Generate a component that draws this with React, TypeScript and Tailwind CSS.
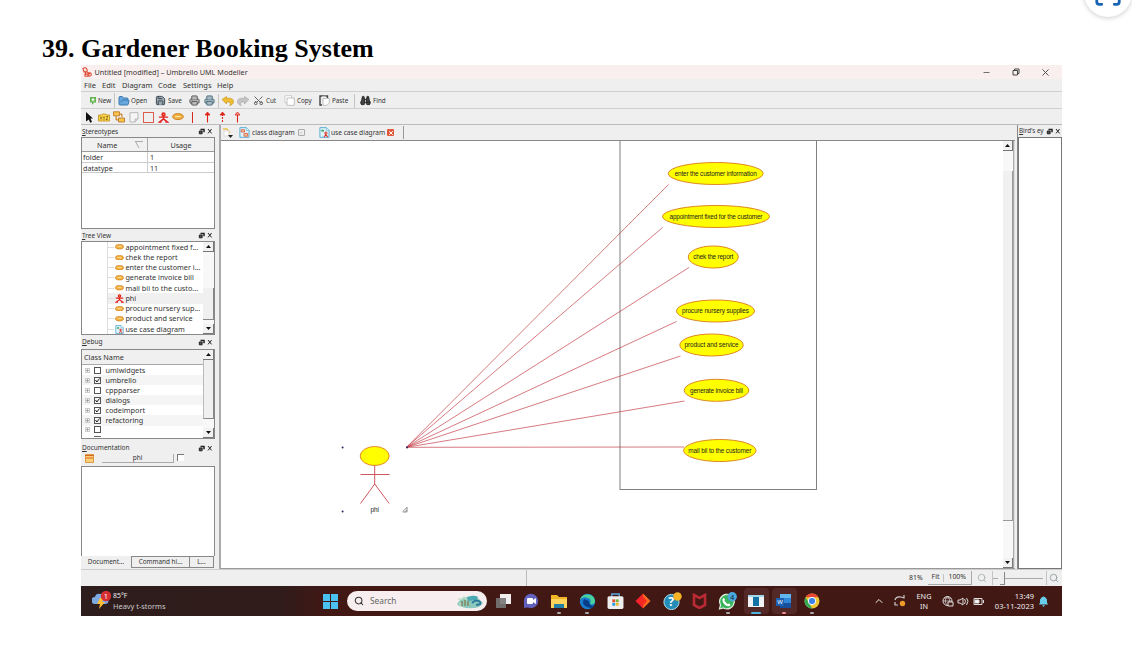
import React from 'react';
import { Scan, Search, Scissors, Printer, Save, FolderOpen, Minus, X, Binoculars, ChevronUp } from 'lucide-react';

const Actor = ({ s = 10, c = '#e32222' }: { s?: number; c?: string }) => (
  <svg width={s} height={s} viewBox="0 0 12 12" fill="none" stroke={c} strokeWidth="1.6">
    <circle cx="6" cy="2.6" r="1.6" fill="#f8a13a" />
    <path d="M1 5.6h10M6 4v4M6 7.5L1.5 11H4M6 7.5L10.5 11H8" />
  </svg>
);
const Oval = ({ w = 9 }: { w?: number }) => (
  <svg width={w} height={w * 0.6} viewBox="0 0 15 9"><ellipse cx="7.5" cy="4.5" rx="6.8" ry="3.8" fill="#f0ad3c" stroke="#c9781c" /><path d="M4 4.5h7" stroke="#fff0b0" strokeWidth="1.3" /></svg>
);
const DiagramIcon = ({ s = 11, actor = false }: { s?: number; actor?: boolean }) => (
  <svg width={s} height={s} viewBox="0 0 12 12">
    <path d="M1 .7h7l3 3v7.6H1z" fill="#dff3fb" stroke="#4ea7cf" />
    <path d="M8 .7v3h3" fill="#fff" stroke="#4ea7cf" strokeWidth=".7" />
    {actor
      ? <><path d="M2.5 3h3v2h-3z" fill="#49a665" /><path d="M7.5 5v3M5.5 6.5h4M7.5 8l-2 3M7.5 8l2 3" stroke="#dc3b2f" strokeWidth="1.2" /></>
      : <><path d="M2.5 3h3.5v2.5H2.5zM5.5 7h4v3h-4z" fill="#f7c29f" stroke="#dc5b3b" strokeWidth=".9" /></>}
  </svg>
);
const DockButtons = () => (
  <svg className="shrink-0" width="15" height="7" viewBox="0 0 15 7" fill="none" stroke="#222">
    <path d="M2.5 1.5h3.5v2.7" strokeWidth="1.5" /><path d="M1.3 3h2.8v2.8H1.3z" fill="#555" strokeWidth="1" />
    <path d="M10 1l3.6 4.4M13.6 1L10 5.4" strokeWidth="1" />
  </svg>
);
const DockHeader = ({ k, rest, className }: { k: string; rest: string; className: string }) => (
  <div className={`flex shrink-0 items-center justify-between pl-px pr-[2px] text-[6.5px] ${className}`}>
    <span className="whitespace-nowrap text-[#333]"><u>{k}</u>{rest}</span><DockButtons />
  </div>
);
const Arrow = ({ up = false }: { up?: boolean }) => (
  <div className="flex h-[10px] shrink-0 items-center justify-center border-r border-b border-[#777] bg-[#f2f2f2]">
    <svg width="5" height="3" viewBox="0 0 5 3"><path d={up ? 'M0 3L2.5 0L5 3z' : 'M0 0L2.5 3L5 0z'} fill="#111" /></svg>
  </div>
);
const Line = ({ className = '' }: { className?: string }) => <div className={`w-px shrink-0 bg-[#c4c4c4] ${className}`} />;
const Tool = ({ w, icon, label, className = '' }: { w: string; icon: React.ReactNode; label?: string; className?: string }) => (
  <div className={`flex h-full shrink-0 items-center gap-[2px] whitespace-nowrap ${w} ${className}`}>{icon}{label && <span>{label}</span>}</div>
);
const RedArrow = ({ dashed = false, open = false }: { dashed?: boolean; open?: boolean }) => (
  <svg width="7" height="12" viewBox="0 0 7 12" fill="none" stroke="#dc2418" strokeWidth="1.1">
    <path d="M3.5 3v8.5" strokeDasharray={dashed ? '2 1' : undefined} /><path d="M1 4L3.5 1L6 4z" fill={open ? '#f5a090' : '#dc2418'} strokeWidth=".8" />
  </svg>
);
const Sheet = () => (
  <svg width="11" height="11" viewBox="0 0 11 11"><path d="M1 .7h6.5v7H1z" fill="#fff" stroke="#bbb" strokeWidth=".7" /><path d="M3 3h7.3v7.3H3z" fill="#fff" stroke="#aaa" strokeWidth=".7" /></svg>
);
const Clipboard = () => (
  <svg width="11" height="11" viewBox="0 0 11 11" fill="none"><path d="M3 1H1v9h2M6.5 1h2v2" stroke="#444" strokeWidth="1.4" /><path d="M3 .7h3.5" stroke="#777" strokeWidth="1.4" /><path d="M4 3.5h6.3V8L8 10.3H4z" fill="#fff" stroke="#aaa" strokeWidth=".7" /></svg>
);
const Undo = ({ c, shade, flip = false }: { c: string; shade: string; flip?: boolean }) => (
  <svg className={flip ? '-scale-x-100' : ''} width="12" height="10" viewBox="0 0 12 10"><path d="M0 3.5L4.5.5v2C9 1.5 11.5 3 11.5 5.5c0 2-1.5 3.6-4 4 1.5-1.3 1.7-3.7-3-3.5v2z" fill={c} stroke={shade} strokeWidth=".6" /></svg>
);

const tree = [
  ['appointment fixed f...', 'o'], ['chek the report', 'o'], ['enter the customer i...', 'o'], ['generate invoice bill', 'o'],
  ['mail bil to the custo...', 'o'], ['phi', 'a'], ['procure nursery sup...', 'o'], ['product and service', 'o'], ['use case diagram', 'd'],
];
const classes: [string, boolean][] = [['umlwidgets', false], ['umbrello', true], ['cppparser', false], ['dialogs', true], ['codeimport', true], ['refactoring', true], ['', false]];

const cases: [number, number, number, number, string, number][] = [
  [715.7, 173.5, 47.5, 11, 'enter the customer information', 82],
  [716, 216.5, 53.5, 11, 'appointment fixed for the customer', 93],
  [713.3, 257, 25, 11, 'chek the report', 40],
  [715.5, 311, 39, 11, 'procure nursery supplies', 67],
  [711.5, 345, 31.7, 11, 'product and service', 54],
  [716.5, 390.3, 32.3, 11, 'generate invoice bill', 53],
  [719.8, 450.5, 36.2, 11, 'mail bil to the customer', 63],
];
const ends = [[668.5, 184.5], [662.5, 227.5], [689, 267.5], [676.5, 321.5], [680.5, 356], [684.5, 401], [684, 447]];

const Diagram = () => (
  <svg width="782" height="427" viewBox="221 141 782 427" className="block shrink-0">
    <rect x="620" y="130" width="196.5" height="359.5" fill="none" stroke="#808080" />
    {ends.map(([x, y]) => <line key={y} x1="406.5" y1="447.3" x2={x} y2={y + 0.01} stroke="#c43c48" strokeWidth=".8" opacity=".85" />)}
    {cases.map(([x, y, rx, ry, t, w]) => (
      <g key={t}>
        <ellipse cx={x} cy={y} rx={rx} ry={ry} fill="#ff0" stroke="#d8791c" strokeWidth=".9" />
        <text x={x} y={y + 2.4} textAnchor="middle" textLength={w} fontSize="6.4" fontFamily="Liberation Sans, sans-serif" fill="#222">{t}</text>
      </g>
    ))}
    <ellipse cx="374.7" cy="456" rx="14.5" ry="9.5" fill="#ff0" stroke="#dd7a20" strokeWidth=".9" />
    <path d="M374.7 465.5v19M360.5 474.5h29M374.7 484l-14.2 19.5M374.7 484l14.5 19.5" stroke="#c9444c" strokeWidth=".9" fill="none" />
    <text x="374.7" y="511.5" textAnchor="middle" textLength="8.5" fontSize="6.4" fontFamily="Liberation Sans, sans-serif" fill="#222">phi</text>
    <g fill="#252560"><circle cx="342.6" cy="447.6" r="1" /><circle cx="407" cy="447.6" r="1" /><circle cx="342.6" cy="511.5" r="1" /></g>
    <path d="M402.5 511.8l4.5-4.5M405 511.8l2-2M407 507v5h-4" stroke="#777" strokeWidth=".8" fill="none" />
  </svg>
);

const Task = ({ children, w = 'w-[28px]', mark = '', box = false }: { children: React.ReactNode; w?: string; mark?: string; box?: boolean }) => (
  <div className={`relative flex h-full shrink-0 items-center justify-center ${w}`}>
    <div className={`flex h-[26px] w-[25px] shrink-0 items-center justify-center rounded-sm ${box ? 'bg-[#522927]' : ''}`}>{children}</div>
    {mark && <i className={`absolute bottom-[2px] h-[2px] rounded ${mark}`} />}
  </div>
);

export default function App() {
  return (
    <div className="relative h-[654px] w-[1132px] overflow-hidden bg-white pl-[81px] font-['Noto_Sans','Open_Sans',sans-serif] text-[#333]">
      <h1 className="-ml-[39px] flex h-[65px] items-end pb-[1px] font-['Liberation_Serif',serif] text-[26px] leading-[30px] font-bold whitespace-nowrap text-black">39. Gardener Booking System</h1>
      <div className="absolute -top-[31px] left-[1084px] flex size-12 items-center justify-center rounded-full bg-white shadow-[0_1px_5px_rgba(0,0,0,0.2)]"><Scan size={30} color="#1764b5" strokeWidth={2.2} /></div>
      <div className="flex h-[551px] w-[981px] flex-col bg-[#efefef]">
        <div className="flex h-[14px] shrink-0 items-center bg-[#faefef]">
          <svg className="ml-[1px] mr-[2.5px]" width="10" height="10" viewBox="0 0 10 10" fill="none" stroke="#dc4932" strokeWidth="1.1"><path d="M1 1.5q3-2 4 1T2 5zM3 4l1 4M5 5l3 2" /><circle cx="7.7" cy="7.5" r="1.6" /><path d="M3 7h3v2.3H3z" /></svg>
          <span className="whitespace-nowrap text-[7.25px]">Untitled [modified] – Umbrello UML Modeller</span>
          <div className="ml-auto flex items-center pr-[11px] text-[#444]"><Minus size={9} strokeWidth={2} /><svg className="ml-[21px]" width="8" height="8" viewBox="0 0 8 8" fill="none" stroke="currentColor"><path d="M1 2.5h4.5V7H1zM2.5 2.5V1H7v4.5H5.5" /></svg><X className="ml-[20px]" size={11} strokeWidth={2} /></div>
        </div>
        <div className="flex h-[13px] shrink-0 items-center border-b border-[#cfcfcf] pt-px pl-[3px] text-[7.5px]">
          {[['File', 'w-[18px]'], ['Edit', 'w-[20px]'], ['Diagram', 'w-[36px]'], ['Code', 'w-[25px]'], ['Settings', 'w-[34px]'], ['Help', 'w-[20px]']].map(([t, w]) => <span key={t} className={w}>{t}</span>)}
        </div>
        <div className="flex h-[17px] shrink-0 items-center border-b border-[#cfcfcf] pt-px pl-[3px] text-[6.3px]">
          <Tool w="w-[31px]" className="gap-0! border-r border-[#c4c4c4] pl-[5px]" icon={<svg className="mr-px" width="8" height="10" viewBox="0 0 8 10"><path d="M1 1h6v5.5H5L3 9V6.5H1z" fill="#63b552" /><path d="M4 2v3.5M2.4 3.8h3.2" stroke="#fff" strokeWidth="1" /></svg>} label="New" />
          <Tool w="w-[40px]" className="pl-[3px] gap-[1px]!" icon={<FolderOpen size={12} fill="#67a8df" color="#3c78ad" />} label="Open" />
          <Tool w="w-[34px]" icon={<Save size={11} fill="#9ba8b0" color="#35424b" />} label="Save" />
          <Tool w="w-[15px]" icon={<Printer size={11} color="#555" fill="#bbb" />} />
          <Tool w="w-[14px]" icon={<Printer size={11} color="#47697b" fill="#a8bac3" />} />
          <Line className="h-[14px]" />
          <Tool w="w-[18px]" className="pl-[3px]" icon={<Undo c="#f0bd30" shade="#c08a15" />} />
          <Tool w="w-[16px]" icon={<Undo c="#c4c4c4" shade="#a5a5a5" flip />} />
          <Tool w="w-[31px]" icon={<Scissors className="-rotate-90" size={11} color="#555" />} label="Cut" />
          <Tool w="w-[35px]" icon={<Sheet />} label="Copy" />
          <Tool w="w-[35px]" icon={<Clipboard />} label="Paste" />
          <Line className="h-[14px]" />
          <Tool w="w-[35px]" className="pl-[5px]" icon={<Binoculars size={11} fill="#444" color="#222" />} label="Find" />
        </div>
        <div className="flex h-[16px] shrink-0 items-center border-b border-[#bbb] pt-px pl-[4px]">
          <Tool w="w-[13px]" icon={<svg width="9" height="11" viewBox="0 0 9 11"><path d="M1 0l7 6.5H5.5L7 10l-1.8.8L3.8 7.6 1 9.6z" fill="#111" /></svg>} />
          <Tool w="w-[15px]" icon={<svg width="12" height="9" viewBox="0 0 12 9"><path d="M.5 2h3l1-1h3l1 1h3v6H.5z" fill="#ffd64a" stroke="#bb8b18" strokeWidth=".8" /><path d="M2 3.5l2 3M4 3.5l-2 3M5 3.5l1 1.5L7 3.5M6 5v2M8 3.5h2l-2 3h2" stroke="#684c08" strokeWidth=".6" fill="none" /></svg>} />
          <Tool w="w-[16px]" icon={<svg width="12" height="12" viewBox="0 0 12 12" fill="#f7c74a" stroke="#b76b23" strokeWidth=".8"><path d="M.5.8h6v4h-6zM5.5 7h6v4h-6zM3 5v4h2M7 3h2v3" /></svg>} />
          <Tool w="w-[14px]" icon={<svg width="10" height="11" viewBox="0 0 10 11"><path d="M1 .7h8v6L6 10H1zM6 10V7h3" fill="#f5f5f5" stroke="#aaa" strokeWidth=".8" /></svg>} />
          <Tool w="w-[15px]" icon={<span className="size-[11px] border border-[#dd5c50]" />} />
          <Tool w="w-[14px]" icon={<Actor s={11} />} />
          <Tool w="w-[20px]" icon={<Oval w={12} />} />
          <Tool w="w-[12px]" icon={<i className="h-[11px] w-px bg-[#d42a20]" />} />
          <Tool w="w-[15px]" icon={<RedArrow />} /><Tool w="w-[15px]" icon={<RedArrow dashed />} /><Tool w="w-[15px]" icon={<RedArrow open />} />
        </div>
        <div className="flex h-[444px] shrink-0">
          <div className="flex w-[134px] shrink-0 flex-col">
            <DockHeader k="S" rest="tereotypes" className="h-[12px] pt-px" />
            <div className="h-[92px] border border-[#888] bg-white text-[7.2px]">
              <div className="flex h-[14px] border-b border-[#999] bg-[#f1f1f1]"><div className="relative flex w-[66px] items-center border-r border-[#aaa] pt-px pl-[15px]">Name<svg className="absolute right-[4px]" width="8" height="8" viewBox="0 0 8 8"><path d="M0 .5h8M.5.5L4 7" stroke="#aaa" fill="none" /></svg></div><div className="flex flex-1 items-center justify-center pt-px">Usage</div></div>
              {[['folder', '1'], ['datatype', '11']].map(([a, b]) => <div key={a} className="flex h-[10.5px] border-b border-[#ccc] leading-[10px]"><span className="w-[66px] border-r border-[#ccc] pl-[1px]">{a}</span><span className="pl-[2px]">{b}</span></div>)}
            </div>
            <DockHeader k="T" rest="ree View" className="h-[12px] pt-px" />
            <div className="flex h-[94px] border border-[#888] bg-white">
              <div className="flex-1 overflow-hidden text-[7.25px]">
                {tree.map(([t, type]) => <div key={t} className={`ml-[25px] flex h-[10.25px] items-center border-l border-[#ddd] whitespace-nowrap ${t === 'phi' ? 'bg-[#f0f0f0]' : ''}`}><i className="h-px w-[6px] bg-[#ddd]" /><span className="mr-[1.4px] flex w-[10px] shrink-0 justify-center">{type === 'o' ? <Oval /> : type === 'a' ? <Actor s={9} /> : <DiagramIcon s={9} actor />}</span>{t}</div>)}
              </div>
              <div className="flex w-[11px] flex-col bg-[#f8f8f8]"><Arrow up /><div className="mt-[36px] mb-[4px] flex-1 border-r border-b border-[#888] bg-[#f0f0f0]" /><Arrow /></div>
            </div>
            <DockHeader k="D" rest="ebug" className="h-[14px]" />
            <div className="flex h-[90px] border border-[#888] bg-white text-[7.25px]">
              <div className="flex-1 overflow-hidden">
                <div className="flex h-[15px] items-center border-b border-[#aaa] bg-[#f0f0f0] pl-[2px]">Class Name</div>
                {classes.map(([t, on], i) => <div key={i} className={`flex items-center ${i === 6 ? 'h-[9.5px] pb-px' : 'h-[10.1px]'} ${i % 2 ? 'bg-[#f5f5f5]' : ''}`}><span className="mx-[3px] flex size-[5px] items-center justify-center border border-[#ccc]"><svg width="5" height="5" viewBox="0 0 5 5"><path d="M0 2.5h5M2.5 0v5" stroke="#666" strokeWidth=".8" /></svg></span><span className="mr-[4.5px] ml-[1px] flex size-[7px] items-center justify-center border border-[#555]">{on && <svg width="5" height="5" viewBox="0 0 5 5"><path d="M.5 2l1.4 2L4.5.5" fill="none" stroke="#222" /></svg>}</span>{t}</div>)}
                <i className="mt-px ml-[12px] block h-px w-[7px] bg-[#666]" />
              </div>
              <div className="flex w-[11px] flex-col bg-[#f8f8f8]"><Arrow up /><div className="mb-[9px] flex-1 border-x border-b border-[#888] border-l-[#bbb] bg-[#f0f0f0]" /><Arrow /></div>
            </div>
            <DockHeader k="D" rest="ocumentation" className="mt-[3px] h-[12px]" />
            <div className="flex h-[12px] items-start text-[6.5px]"><svg className="ml-[4px]" width="9" height="9" viewBox="0 0 9 9"><path d="M.5.5h8v8h-8z" fill="#ffd07a" stroke="#de9a43" /><path d="M0 1.5h9M1 4h7" stroke="#d46a24" /></svg><span className="ml-[8px] flex h-[9px] w-[72px] items-center justify-center border-r border-b border-[#aaa]">phi</span><span className="ml-[3px] size-[7px] border-t border-l border-[#777] bg-white" /></div>
            <div className="h-[90px] border border-[#888] border-b-0 bg-white" />
            <div className="flex h-[12px] text-[6.4px]"><span className="flex w-[50px] items-center justify-center">Document...</span><span className="flex w-[59px] items-center justify-center border border-[#888]">Command hi...</span><span className="flex w-[24px] items-center justify-center border border-l-0 border-[#888]">L...</span></div>
          </div>
          <div className="ml-[4px] flex w-[796px] flex-col border-l-2 border-[#aaa]">
            <div className="flex h-[16px] shrink-0 items-center border-b border-[#888] text-[6.6px]">
              <svg className="ml-[1px]" width="11" height="10" viewBox="0 0 11 10"><path d="M1 1h4l3 4" fill="none" stroke="#efc04b" strokeWidth="1.3" /><path d="M2 3h5v5H2z" fill="#fff" stroke="#ddd" /><path d="M6 7h5L8.5 10z" fill="#222" /></svg>
              <div className="ml-[6px] flex w-[80px] items-center gap-[2px] whitespace-nowrap"><DiagramIcon />class diagram<span className="ml-[1px] flex size-[7px] items-center justify-center rounded-[1px] border border-[#aaa]"><X size={4} color="#aaa" /></span></div>
              <div className="flex h-[13px] w-[85px] items-center gap-[1px] border-r border-[#999] whitespace-nowrap"><DiagramIcon actor />use case diagram<span className="ml-[1px] flex size-[7px] items-center justify-center rounded-[1px] bg-[#df5a3c]"><X size={6} color="#fff" strokeWidth={4} /></span></div>
            </div>
            <div className="flex flex-1 overflow-hidden border-b border-[#999] bg-white"><Diagram /><div className="flex w-[10px] flex-col bg-[#f8f8f8]"><Arrow up /><div className="mt-[20px] mb-[37px] flex-1 border-r border-b border-[#999] bg-[#f0f0f0]" /><Arrow /></div><div className="flex-1 border-l border-[#aaa] bg-[#ddd]" /></div>
          </div>
          <div className="ml-[2px] flex flex-1 flex-col border-l border-[#888]"><div className="flex h-[12px] shrink-0 items-center justify-between pl-[1px] pr-px text-[6.3px]"><span className="whitespace-nowrap"><u>B</u>ird's ey</span><DockButtons /></div><div className="flex-1 border border-[#777] bg-white" /></div>
        </div>
        <div className="flex h-[17px] shrink-0 items-center border-t border-[#ccc] text-[6.9px]">
          <i className="h-full w-[446px] border-r border-[#bbb]" /><span className="ml-[382px]">81%</span><span className="ml-[5px] flex h-[14px] w-[44px] items-center border-r border-b border-[#aaa] pl-[4px]">Fit<Line className="mx-[4px] h-[8px]" />100%</span><Search className="ml-[5px]" size={10} color="#a5aeb2" /><Line className="ml-[5px] h-[14px]" /><i className="h-px w-[5px] bg-[#aaa]" /><i className="ml-[2px] h-[13px] w-[5px] border-r border-b border-[#888]" /><i className="h-px w-[38px] bg-[#aaa]" /><Line className="ml-[3px] h-[14px]" /><Search className="ml-[2px]" size={10} color="#8e999e" />
        </div>
        <div className="flex h-[30px] shrink-0 items-center bg-[linear-gradient(90deg,#2d1d1c_0,#301c1b_200px,#421814_250px,#421814_100%)] text-[7px] text-[#eee]">
          <svg className="ml-[11px]" width="20" height="22" viewBox="0 0 20 22"><path d="M3 14a3.5 3.5 0 010-7q1-4 5-3 4-1 5 3a3.5 3.5 0 010 7z" fill="#7caae0" /><path d="M8 8h4l-2 4h3l-6 7 1-5H5z" fill="#ffbd38" /><circle cx="14" cy="6" r="5.2" fill="#d62f32" /><text x="14" y="8.8" fontSize="7.5" fill="#fff" textAnchor="middle">1</text></svg>
          <div className="w-[211px] pb-px pl-[1px] text-[7.4px] leading-[10px]"><span className="text-[6.9px]">85°F</span><br /><span className="text-[#ccc]">Heavy t-storms</span></div>
          <svg width="15" height="15" viewBox="0 0 15 15" fill="#49c2f2"><path d="M0 0h7v7H0zM8 0h7v7H8zM0 8h7v7H0zM8 8h7v7H8z" /></svg>
          <div className="ml-[9px] flex h-[20px] w-[140px] items-center rounded-full bg-[#f7efef] pl-[7px] text-[8.3px] text-[#666]"><Search size={10} color="#333" strokeWidth={2.5} /><span className="ml-[6px]">Search</span><svg className="ml-auto mr-[3px]" width="28" height="15" viewBox="0 0 28 15"><path d="M1 10q3-5 7-6 8-4 13-1l6 6-4 4q-10 3-20-1z" fill="#8cc9bd" /><path d="M11 4q6-4 11-1l-2 3-8 1z" fill="#4ba8b5" /><path d="M2 5h4l2-2 3 3M3 9l3 3" fill="none" stroke="#c2dfc5" strokeWidth="1.5" /><path d="M6 7v5M9 6v6M12 7v5" stroke="#837e50" strokeWidth="1.3" /><path d="M16 9q5-5 9 0M20 11l5-1" fill="none" stroke="#2d799b" strokeWidth="1.8" /></svg></div>
          <Task w="w-[32px]"><svg width="17" height="15" viewBox="0 0 17 15"><path d="M5 0h11v10H5z" fill="#f0eeee" /><path d="M1 4h10v10H1z" fill="#777" opacity=".9" /></svg></Task>
          <Task w="w-[23px]"><svg width="16" height="16" viewBox="0 0 16 16"><circle cx="8" cy="8" r="7.2" fill="#6261bd" /><path d="M1 15V8l6 6z" fill="#6261bd" /><rect x="4" y="5" width="6" height="6" rx="1" fill="#fff" /><path d="M10 7l3-2v6l-3-2z" fill="#fff" /></svg></Task>
          <Task w="w-[34px]" mark="w-[4px] bg-[#aaa]"><svg width="17" height="15" viewBox="0 0 17 15"><path d="M0 1h6l2 2h8v11H0z" fill="#f3b527" /><path d="M0 5h16v9H0z" fill="#ffd45c" /><path d="M3 10h10v4H3z" fill="#247fa7" /></svg></Task>
          <Task w="w-[22px]" mark="w-[4px] bg-[#aaa]"><svg width="17" height="17" viewBox="0 0 17 17"><circle cx="8.5" cy="8.5" r="7.7" fill="#187dce" /><path d="M1 7C2 0 15-1 16 8q0 4-5 3 2-5-2-6Q3 3 1 7z" fill="#4bd29a" /><path d="M5 6q-4 7 7 9 2 0 3-2-5 0-5-5z" fill="#083e89" /></svg></Task>
          <Task w="w-[34px]"><svg width="17" height="17" viewBox="0 0 15 16"><path d="M4 5V1h7v4" fill="none" stroke="#5ba8df" strokeWidth="1.3" /><rect x="0" y="3" width="15" height="12" rx="1.5" fill="#eee" /><path d="M4.5 6h2.7v2.7H4.5z" fill="#e44d2c" /><path d="M7.8 6h2.7v2.7H7.8z" fill="#7bb342" /><path d="M4.5 9.3h2.7V12H4.5z" fill="#249be4" /><path d="M7.8 9.3h2.7V12H7.8z" fill="#efb52e" /></svg></Task>
          <Task w="w-[22px]"><svg width="16" height="16" viewBox="0 0 16 16"><path d="M8 .5L.5 8 8 15.5z" fill="#f5222d" /><path d="M8 .5L15.5 8 8 15.5z" fill="#ff6a20" /><path d="M8 3.5L4 8l4 4.5L12 8z" fill="#f52a20" /></svg></Task>
          <Task w="w-[36px]"><svg width="19" height="18" viewBox="0 0 19 18"><circle cx="8.5" cy="10" r="7.6" fill="#218db8" stroke="#b0dbe6" /><text x="8" y="14" fontSize="12" fontWeight="bold" fill="#fff" textAnchor="middle">?</text><circle cx="14.5" cy="4.5" r="4.2" fill="#f5b326" /></svg></Task>
          <Task w="w-[19px]"><svg width="15" height="16" viewBox="0 0 15 16"><path d="M2 2l5.5 3L13 2v10l-5.5 3L2 12z" fill="none" stroke="#b92a34" strokeWidth="2.6" /></svg></Task>
          <Task w="w-[37px]" mark="w-[4px] bg-[#aaa]"><svg width="19" height="18" viewBox="0 0 19 18"><path d="M1.5 17l1-4a7.3 7.3 0 113 3z" fill="#3ab55d" stroke="#e2f2e4" strokeWidth="1.2" /><path d="M5 6l2 1-.5 2 3 3 2-.5 1 2c-3 3-10-3-7.5-7.5" fill="#fff" /><circle cx="14.2" cy="4.8" r="4.7" fill="#4ba8df" /><text x="14.2" y="7.5" textAnchor="middle" fontSize="7" fill="#123">4</text></svg></Task>
          <Task w="w-[20px]" box mark="w-[10px] bg-[#4bb4dd]"><svg width="16" height="13" viewBox="0 0 16 13"><path d="M0 0h16v12H0z" fill="#f0f3f4" /><path d="M5 2h6v9H5z" fill="#1373a5" /><path d="M0 1h16" stroke="#52bbdf" /></svg></Task>
          <Task w="w-[36px]" box mark="w-[4px] bg-[#ef8b8b]"><svg width="16" height="15" viewBox="0 0 16 15"><path d="M4 0h11v14H4z" fill="#3188d8" /><path d="M4 0h11v4H4z" fill="#61b6ef" /><path d="M4 9h11v5H4z" fill="#174f9b" /><path d="M0 4h8v8H0z" fill="#1d60b1" /><text x="4" y="10" textAnchor="middle" fontSize="6" fill="#fff">W</text></svg></Task>
          <Task w="w-[20px]" mark="w-[4px] bg-[#aaa]"><svg width="16" height="16" viewBox="0 0 16 16"><circle cx="8" cy="8" r="7.5" fill="#efc735" /><path d="M1.5 4.3A7.5 7.5 0 0114.5 4.3H8z" fill="#e84535" /><path d="M1.5 4.3L5 10l3 5.5A7.5 7.5 0 011.5 4.3" fill="#36a853" /><circle cx="8" cy="8" r="3.7" fill="#3c82e8" stroke="#fff" /></svg></Task>
          <ChevronUp className="ml-[51px]" size={12} />
          <svg className="ml-[9px]" width="12" height="12" viewBox="0 0 12 12" fill="none" stroke="#ccc" strokeWidth="1.2"><path d="M1 5q1-4 6-3l3 1V0M1 7v3h3" /><circle cx="8.5" cy="8.5" r="2.7" fill="#f09b29" stroke="none" /></svg>
          <div className="ml-[9px] w-[18px] text-center text-[7.3px] leading-[10px]">ENG<br />IN</div>
          <svg className="ml-[9px]" width="43" height="12" viewBox="0 0 43 12" fill="none" stroke="#ddd"><circle cx="5.5" cy="6" r="4.5" /><path d="M1 6h9M5.5 1.5Q1 6 5.5 10.5M5.5 1.5Q10 6 5.5 10.5M2 3h7" strokeWidth=".7" /><path d="M6 7h5v4H6z" fill="#421814" /><path d="M16 5v3h2l3 2V3l-3 2zM22.5 4q2 2 0 5M24.5 3q3 3 0 7" /><path d="M32 3.5h8v6h-8z" /><path d="M33 5h4v3h-4z" fill="#fff" /><path d="M41.5 5v3" /></svg>
          <div className="ml-auto pb-px text-right text-[7.5px] leading-[10px] whitespace-nowrap">13:49<br />03-11-2023</div>
          <svg className="ml-[5px] mr-[14px]" width="9" height="11" viewBox="0 0 9 11"><path d="M0 8.5L1 6.5V3.5q3.5-6 7 0v3l1 2zM3 9.3h3L4.5 11z" fill="#68cdea" /></svg>
        </div>
      </div>
    </div>
  );
}
